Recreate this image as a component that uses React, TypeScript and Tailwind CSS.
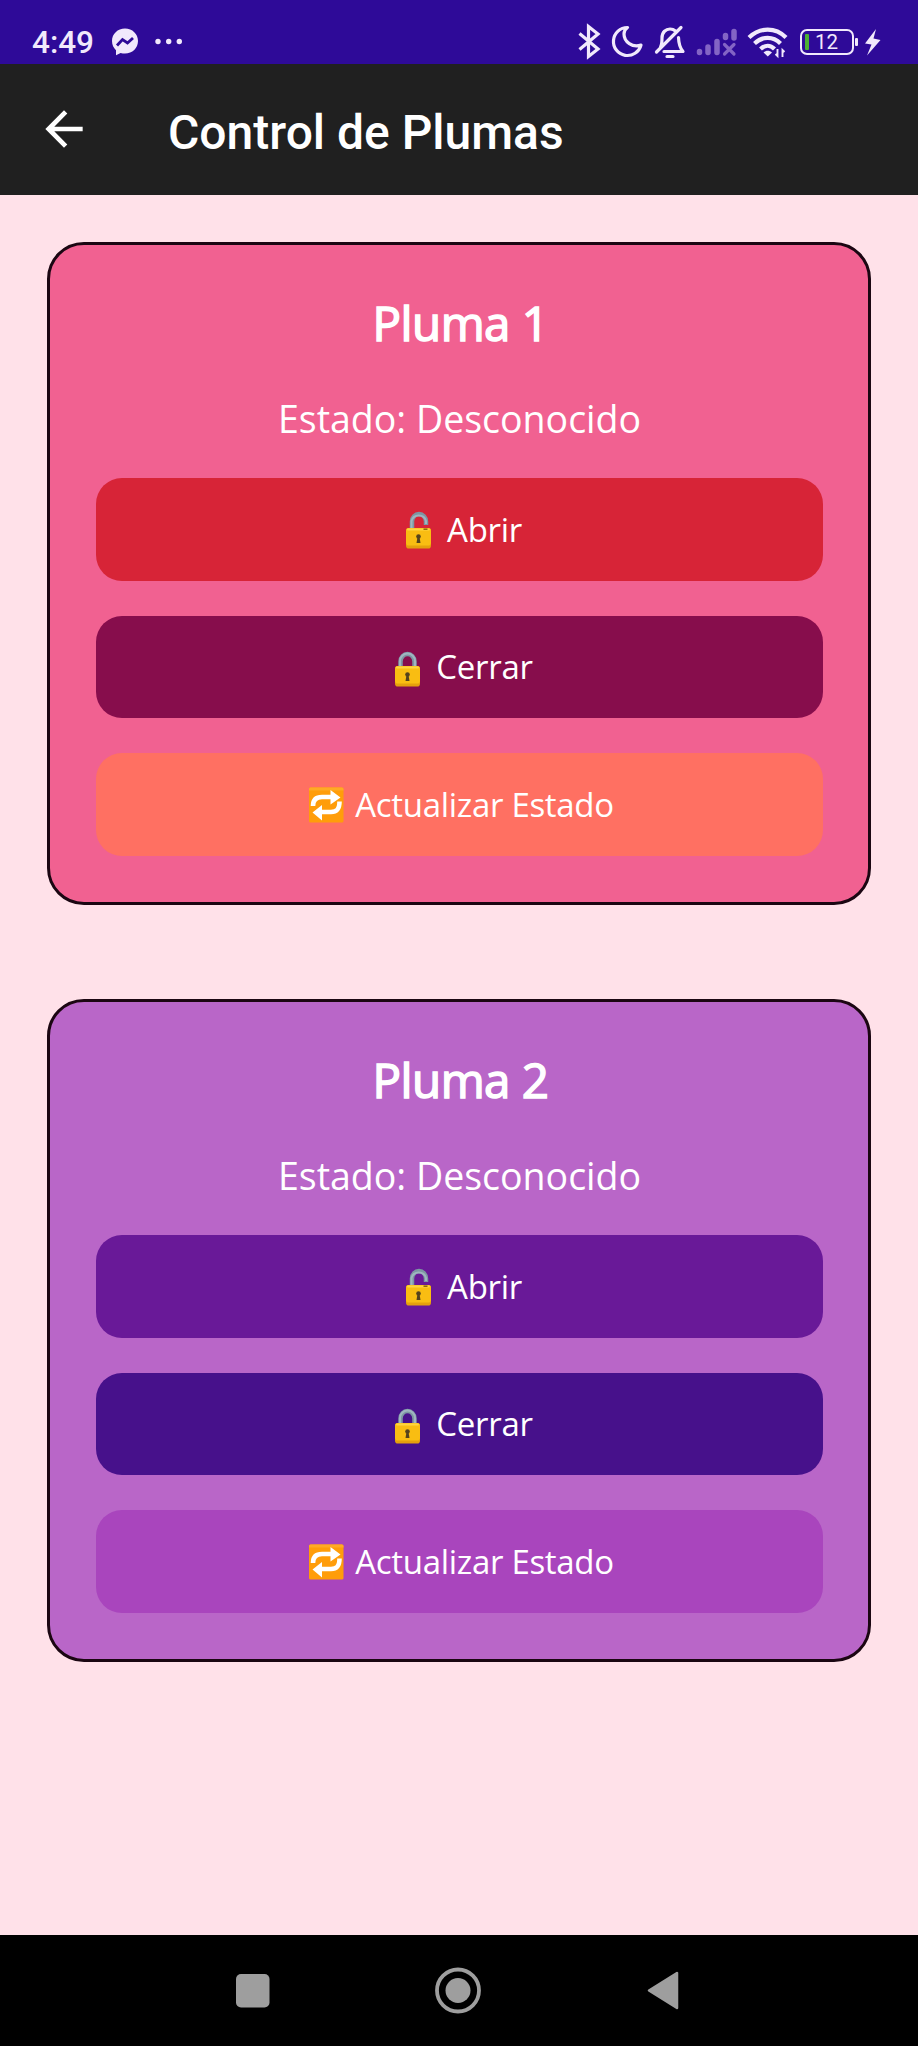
import React from "react";

type IconKind = "unlock" | "lock" | "repeat";

function Emoji({ kind }: { kind: IconKind }) {
  if (kind === "repeat") {
    return (
      <svg className="h-[42px] w-[41px] shrink-0" viewBox="0 -1 41 42">
        <rect x="3" y="3.5" width="34.5" height="35" rx="1.5" fill="#ff9d0a" />
        <path d="M3 5q0-1.500 1.500-1.500h31.500q1.500 0 1.500 1.500v1.500H3z" fill="#ffaa24" />
        <g fill="none" stroke="#fff" strokeWidth="4.6">
          <path d="M7 22c0-6.500 3.500-9 9-9h10" />
          <path d="M33.500 17.500c0 8-3 10.500-8.500 10.500H14" />
        </g>
        <path d="M24.500 6 34.500 13.500l-10 7zM16 21 6.500 28.500 16 36.500z" fill="#fff" />
      </svg>
    );
  }
  const open = kind === "unlock";
  return (
    <svg className="h-[42px] w-[41px] shrink-0" viewBox="0 0 41 42">
      <path
        d={open ? "M14 24V13.500a7 7.500 0 0 1 14 0V17" : "M13.500 22V15.500a7 7.500 0 0 1 14 0V22"}
        fill="none"
        stroke="#7d97a3"
        strokeWidth="4.500"
      />
      <path
        d={open ? "M13.500 23V13a7.500 7.500 0 0 1 14.500 0V16" : "M13 21V15a7.500 7.500 0 0 1 15 0V21"}
        fill="none"
        stroke="#9fb5c0"
        strokeWidth="2"
      />
      <rect x="8" y="20" width="25" height="20.500" rx="2.800" fill="#e5a00d" />
      <rect x="8" y="20" width="25" height="17.500" rx="2.800" fill="#f9bd12" />
      <path d="M10 21.500h21" stroke="#ffd640" strokeWidth="1.800" strokeLinecap="round" />
      {open && <path d="M25.500 21.200h4" stroke="#8b6508" strokeWidth="1.500" />}
      <circle cx="20.500" cy="28.500" r="2.300" fill="#54431c" />
      <path d="M19.500 29h2l1 6h-4z" fill="#54431c" />
    </svg>
  );
}

function ActionButton({ kind, label, color }: { kind: IconKind; label: string; color: string }) {
  return (
    <button
      className={`flex h-[102.500px] w-full items-center justify-center rounded-[26px] pl-[2px] text-[33px] leading-none tracking-[-0.300px] text-white ${color}`}
    >
      <Emoji kind={kind} />
      <span className="ml-[8px]">{label}</span>
    </button>
  );
}

interface PlumaProps {
  name: string;
  card: string;
  colors: [string, string, string];
}

function PlumaCard({ name, card, colors }: PlumaProps) {
  return (
    <section
      className={`flex h-[663px] flex-col items-center rounded-[37px] border-3 border-[#1b0612] px-[45.500px] text-white ${card}`}
    >
      <h2 className="mt-[48px] pl-[3px] text-[47.500px] leading-[60px] font-normal tracking-[-0.500px] [-webkit-text-stroke:1.500px_white]">
        {name}
      </h2>
      <p className="mt-[42px] pl-[1px] text-[37.500px] leading-[48px]">Estado: Desconocido</p>
      <div className="mt-[35px] flex w-full flex-col gap-[35px]">
        <ActionButton kind="unlock" label="Abrir" color={colors[0]} />
        <ActionButton kind="lock" label="Cerrar" color={colors[1]} />
        <ActionButton kind="repeat" label="Actualizar Estado" color={colors[2]} />
      </div>
    </section>
  );
}

function StatusBar() {
  return (
    <div className="flex h-16 items-center bg-[#2e0a98] font-[Roboto,sans-serif] text-[#f1e9fc]">
      <span className="ml-[32px] w-[74px] pt-[21px] text-[31.500px] leading-none font-medium">4:49</span>
      <svg className="h-16 w-[94px]" viewBox="106 0 94 64">
        <path d="M125 28.500c-7.400 0-13 5.500-13 12.500 0 3.800 1.600 7 4 9.200v5l4.600-2.300c1.400.4 2.900.6 4.400.6 7.400 0 13-5.500 13-12.500s-5.600-12.500-13-12.500z" fill="currentColor" />
        <path d="m117 45.500 5.500-6 5 3.500 5.500-5" fill="none" stroke="#2e0a98" strokeWidth="2.800" />
        <circle cx="158" cy="41.500" r="2.700" fill="currentColor" />
        <circle cx="168.700" cy="41.500" r="2.700" fill="currentColor" />
        <circle cx="179.300" cy="41.500" r="2.700" fill="currentColor" />
      </svg>
      <div className="ml-[374px] flex">
        <svg className="h-16 w-8" viewBox="574 0 32 64" fill="none" stroke="currentColor" strokeWidth="3.200">
          <path d="m579.500 33.500 18.500 15.500-9.500 7.500V26.500l9.500 7.500-18.500 15.500" />
        </svg>
        <svg className="h-16 w-[42px]" viewBox="606 0 42 64" fill="none" stroke="currentColor" strokeWidth="3.200" strokeLinejoin="round">
          <path d="M627.500 27.500a14 14 0 1 0 13.500 17.500c-8.500 3-17-3-17-11 0-2.500 1.300-5 3.500-6.500z" />
        </svg>
        <svg className="h-16 w-[44px]" viewBox="648 0 44 64" fill="none" stroke="currentColor" strokeWidth="3.200" strokeLinecap="round" strokeLinejoin="round">
          <path d="M656.500 52 681 27.500M660.500 47c1.500-2.500 1.500-6.500 1.500-9 0-6 4-9 8-9 2.200 0 4 .7 5.500 2M678.500 37.500c.2 7 1.500 10.500 4.500 14H664M667 56.500h6" />
        </svg>
        <svg className="h-16 w-[50px]" viewBox="692 0 50 64" fill="none" stroke="#8364c5" strokeWidth="5.500" strokeLinecap="round">
          <path d="M699.500 51.500v1M708 47v5.500M717 41.500v11M725.500 35.500v2M734 31.500v6.500" />
          <path d="m724.500 44.500 9.500 9.500m0-9.500-9.500 9.500" strokeWidth="3.200" />
        </svg>
        <svg className="h-16 w-[58px]" viewBox="742 0 58 64" fill="none" stroke="currentColor" strokeWidth="4.200">
          <path d="M749 37.500c11-10.500 26.500-10.500 37 0M754.500 43.500c8-7.500 18.500-7.500 26 0M760.500 49c4.500-4.200 10-4.200 14 0" />
          <path d="M763.500 52.500c2.500-2.300 6-2.300 8.500 0l-4.200 4z" fill="currentColor" stroke="none" />
          <path d="M777.500 49v7l-2-2M782.500 57v-7l2 2" strokeWidth="1.900" />
        </svg>
      </div>
      <div className="mt-[20px] flex h-[26px] w-[54px] items-center rounded-[7px] border-2 border-current pl-[3px]">
        <span className="h-[16px] w-[4px] rounded-[1px] bg-[#4caf32]" />
        <span className="ml-[6px] pt-px text-[20.500px] leading-none">12</span>
      </div>
      <svg className="h-16 w-[30px]" viewBox="854 0 30 64" fill="currentColor">
        <rect x="855" y="38" width="3" height="8" rx="1" />
        <path d="m876 29-11 14.500 6.500 1-4.500 11 13.500-15.500-7-1.500z" />
      </svg>
    </div>
  );
}

export default function App() {
  return (
    <div className="flex h-[2046px] w-[918px] flex-col overflow-hidden bg-[#ffe1e9] font-['Open_Sans','Noto_Sans',sans-serif]">
      <StatusBar />
      <header className="flex h-[131px] items-center bg-[#202020] pl-[36px] text-white">
        <svg className="mb-[2px] h-14 w-14" viewBox="0 0 24 24" fill="currentColor">
          <path d="M20 11H7.830l5.590-5.590L12 4l-8 8 8 8 1.410-1.410L7.830 13H20z" />
        </svg>
        <h1 className="ml-[76px] pt-[6px] font-[Roboto,sans-serif] text-[48px] leading-none font-medium">Control de Plumas</h1>
      </header>
      <main className="flex flex-1 flex-col gap-[94px] px-[47px] pt-[47px]">
        <PlumaCard name="Pluma 1" card="bg-[#f16191]" colors={["bg-[#d72437]", "bg-[#870d4c]", "bg-[#ff7062]"]} />
        <PlumaCard name="Pluma 2" card="bg-[#b966c8]" colors={["bg-[#691998]", "bg-[#47118b]", "bg-[#a945bd]"]} />
      </main>
      <nav className="flex h-[111px] items-center bg-black">
        <svg className="h-[111px] w-full" viewBox="0 1935 918 111" fill="#9e9e9e">
          <rect x="236" y="1974" width="33.500" height="33.500" rx="5" />
          <circle cx="458" cy="1990.500" r="21" fill="none" stroke="#9e9e9e" strokeWidth="3.800" />
          <circle cx="458" cy="1990.500" r="12.500" />
          <path d="M649 1990.500 677 1973v35z" stroke="#9e9e9e" strokeWidth="2.500" strokeLinejoin="round" />
        </svg>
      </nav>
    </div>
  );
}
